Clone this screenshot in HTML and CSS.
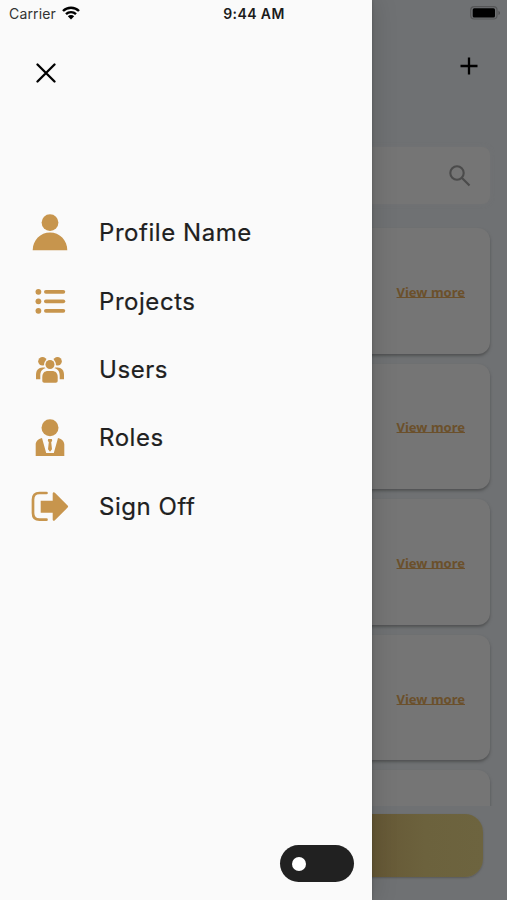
FILE: index.html
```html
<!DOCTYPE html>
<html lang="en">
<head>
<meta charset="utf-8">
<title>Menu</title>
<link rel="stylesheet" href="styles.css">
</head>
<body>
<div class="screen">
  <main class="page">
    <header class="topbar">
      <svg class="plus" viewBox="0 0 18 18"><path d="M9 .5v17M.5 9h17"/></svg>
    </header>
    <div class="search">
      <svg class="lens" viewBox="0 0 22 22"><circle cx="8" cy="8" r="6.7"/><path d="M13 13l7.500 7.500"/></svg>
    </div>
    <section class="list">
      <article class="card"><a class="more">View more</a></article>
      <article class="card"><a class="more">View more</a></article>
      <article class="card"><a class="more">View more</a></article>
      <article class="card"><a class="more">View more</a></article>
      <article class="card"></article>
    </section>
    <div class="action"></div>
  </main>

  <aside class="drawer">
    <svg class="close" viewBox="0 0 20 20"><path d="M1.500 1.500l17 17M18.500 1.500l-17 17"/></svg>
    <nav class="menu">
      <a class="item">
        <svg class="icon" viewBox="0 0 40 40"><circle cx="20" cy="9.600" r="8.400"/><path d="M2.700 37.300C2.700 27 10.500 19.500 20 19.500s17.300 7.500 17.300 17.800z"/></svg>
        <span class="label">Profile Name</span>
      </a>
      <a class="item">
        <svg class="icon" viewBox="0 0 40 40"><circle cx="8.400" cy="9.800" r="2.900"/><circle cx="8.400" cy="19.300" r="2.900"/><circle cx="8.400" cy="28.800" r="2.900"/><rect x="14" y="7.900" width="21.200" height="3.800" rx="1.900"/><rect x="14" y="17.400" width="21.200" height="3.800" rx="1.900"/><rect x="14" y="26.900" width="21.200" height="3.800" rx="1.900"/></svg>
        <span class="label">Projects</span>
      </a>
      <a class="item">
        <svg class="icon" viewBox="0 0 40 40"><circle cx="12.500" cy="11.200" r="4.300"/><circle cx="27.500" cy="11.200" r="4.300"/><path d="M6 29.200v-4.500c0-4.300 2.500-7.200 6.500-7.200h15c4 0 6.500 2.900 6.500 7.200v4.500z"/><path class="cut" d="M20 8.600a5.900 5.900 0 0 1 4.500 9.700c3.600.7 5.200 3.500 5.200 7.500V34H10.300v-8.200c0-4 1.600-6.800 5.200-7.500A5.900 5.900 0 0 1 20 8.600z"/><circle cx="20" cy="14.500" r="4.500"/><path d="M12.300 30.800v-3.600c0-4.200 2.200-6.200 5.700-6.200h4c3.500 0 5.700 2 5.700 6.200v3.600c0 1.300-.7 2-2 2H14.300c-1.300 0-2-.7-2-2z"/></svg>
        <span class="label">Users</span>
      </a>
      <a class="item">
        <svg class="icon" viewBox="0 0 40 40"><circle cx="20" cy="9.700" r="8.500"/><path d="M5.700 38V26.500c0-2.700 2.200-5.300 6.300-6.400L16.200 35h7.600L28 20.100c4.100 1.100 6.300 3.700 6.300 6.400V38z"/><path d="M18.200 21h3.600l.4 1.800-1 1.400.8 7-2 2.500-2-2.500.8-7-1-1.400z"/></svg>
        <span class="label">Roles</span>
      </a>
      <a class="item">
        <svg class="icon" viewBox="0 0 40 40"><path class="line" d="M16.500 6H9.500c-4 0-6.500 2.300-6.500 6.500v13.500c0 4.200 2.500 6.700 6.500 6.700h7"/><path d="M10.700 13.800h12V6.700c0-1.400 1.200-1.900 2.200-.9l12.700 12.700c.7.700.7 1.400 0 2.100L24.900 33.300c-1 1-2.200.5-2.200-.9v-6.700h-12z"/></svg>
        <span class="label">Sign Off</span>
      </a>
    </nav>
    <div class="toggle"><span class="knob"></span></div>
  </aside>

  <div class="status">
    <div class="network"><span class="carrier">Carrier</span>
      <svg class="wifi" viewBox="0 0 18 14"><path class="arc" d="M1 5a11.300 11.300 0 0 1 16 0"/><path class="arc" d="M4 8.200a7.100 7.100 0 0 1 10 0"/><path d="M5.800 10.300a4.500 4.500 0 0 1 6.400 0L9 13.600z"/></svg>
    </div>
    <time class="time">9:44 AM</time>
    <svg class="battery" viewBox="0 0 32 14"><rect class="shell" x=".7" y=".7" width="26.300" height="12.300" rx="3.500"/><rect x="2.700" y="2.200" width="22.300" height="9.300" rx="1.500"/><path class="tip" d="M28.500 4.700c2 .8 2 3.500 0 4.300z"/></svg>
  </div>
</div>
</body>
</html>
```
FILE: styles.css
```css
* { box-sizing: border-box; }
body { margin: 0; font-family: Inter, "Liberation Sans", sans-serif; }
svg { display: block; }
.screen { position: relative; width: 507px; height: 900px; overflow: hidden; background: #6f7173; }

.page { height: 900px; display: flex; flex-direction: column; padding: 56px 17px 0 0; }
.topbar { display: flex; justify-content: flex-end; padding-right: 12.500px; height: 91px; }
.plus { width: 18px; height: 18px; fill: none; stroke: #000; stroke-width: 2.300; margin-top: 1px; }
.search { display: flex; justify-content: flex-end; height: 57px; padding: 18px 19px 0 0; border-radius: 8px; background: #757575; box-shadow: 0 0 4px #727374; }
.lens { width: 22px; height: 22px; fill: none; stroke: #4b4b4b; stroke-width: 2.100; }
.list { height: 602px; padding: 24px 17px 0 0; margin-right: -17px; overflow: hidden; display: flex; flex-direction: column; gap: 10px; }
.card { flex: 0 0 125.600px; display: flex; justify-content: flex-end; align-items: center; padding: 2px 25px 0 0; border-radius: 12px; background: #757575; box-shadow: 0 2px 3px #515253; }
.more { font: 700 13px "Noto Sans", sans-serif; color: #6b502b; text-decoration: underline; text-decoration-skip-ink: none; text-underline-offset: 0; }
.action { height: 63px; margin: 8px 7px 0 0; border-radius: 18px; background: linear-gradient(90deg, #655735 76%, #6c623d 88%, #6d643f); box-shadow: 0 1px 2px #59595a; }

.drawer { position: absolute; inset: 0 auto 0 0; width: 372.400px; display: flex; flex-direction: column; background: #fafafa; box-shadow: 0 0 3px rgba(0,0,0,.2), 0 0 24px rgba(0,0,0,.17); }
.close { width: 20px; height: 20px; margin: 63px 0 0 36px; fill: none; stroke: #000; stroke-width: 2.300; stroke-linecap: round; }
.menu { margin-top: 116px; padding-left: 30px; }
.item { display: flex; align-items: center; height: 68.400px; gap: 29px; }
.icon { width: 40px; height: 40px; fill: #c7954d; }
.icon .cut { fill: #fafafa; }
.icon .line { fill: none; stroke: #c7954d; stroke-width: 2.700; stroke-linecap: round; }
.label { font-size: 24px; font-weight: 400; line-height: 30px; color: #202020; letter-spacing: .55px; white-space: nowrap; -webkit-text-stroke: .2px #202020; }
.toggle { display: flex; align-items: center; width: 74px; height: 37px; margin: auto 18px 18px auto; padding-left: 12px; border-radius: 19px; background: #212121; }
.knob { width: 14px; height: 14px; border-radius: 50%; background: #fff; }

.status { position: absolute; inset: 0 0 auto 0; display: grid; grid-template-columns: 1fr auto 1fr; align-items: center; height: 27px; padding: 0 6px 0 9px; }
.network { display: flex; align-items: center; gap: 6px; }
.carrier { font-size: 14px; color: #333; letter-spacing: .15px; }
.wifi { width: 18px; height: 14px; margin-top: -2px; }
.arc { fill: none; stroke: #000; stroke-width: 2.400; }
.time { font-size: 14px; font-weight: 600; color: #1b1b1b; letter-spacing: .4px; margin-right: 2px; }
.battery { width: 32px; height: 14px; justify-self: end; margin: -1px -1px 0 0; }
.shell { fill: none; stroke: #555657; stroke-width: 1.200; }
.tip { fill: #4c4d4e; }
```
